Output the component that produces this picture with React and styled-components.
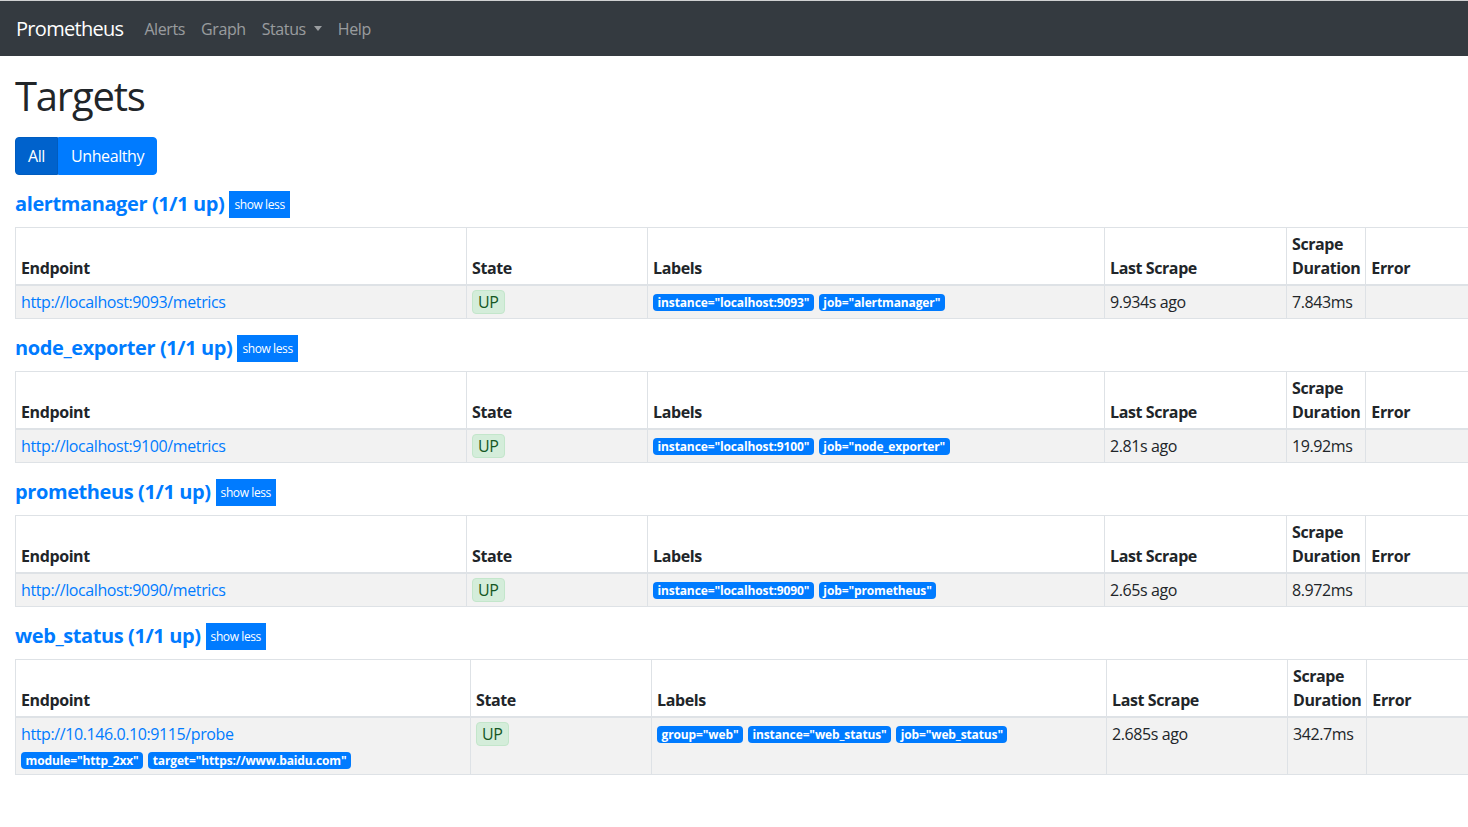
import React from "react";
import styled, { createGlobalStyle } from "styled-components";

const GlobalStyle = createGlobalStyle`
  body {
    margin: 0;
    font-family: "Open Sans", "Noto Sans", sans-serif;
    font-size: 16px;
    line-height: 1.5;
    letter-spacing: -0.025em;
    color: #212529;
    background: #fff;
    overflow-x: hidden;
  }
  button {
    letter-spacing: inherit;
  }
`;

const NavBar = styled.nav`
  height: 56px;
  box-sizing: border-box;
  border-top: 1px solid #cfd0d2;
  background: #343a40;
  display: flex;
  align-items: center;
  padding: 0 16px;
`;

const Brand = styled.span`
  color: #fff;
  font-size: 20px;
  letter-spacing: -0.035em;
  margin-right: 13px;
`;

const NavLink = styled.span`
  color: rgba(255, 255, 255, 0.5);
  padding: 0 8px;
  display: flex;
  align-items: center;
`;

const Caret = styled.span`
  display: inline-block;
  margin-left: 8px;
  border-top: 5px solid rgba(255, 255, 255, 0.5);
  border-left: 4.5px solid transparent;
  border-right: 4.5px solid transparent;
`;

const Main = styled.main`
  padding: 0 15px;
`;

const Title = styled.h1`
  font-size: 40px;
  font-weight: 500;
  line-height: 1.2;
  letter-spacing: -0.03em;
  margin: 16px 0 17px;
`;

const ButtonGroup = styled.div`
  display: flex;
  margin-bottom: 16px;
`;

const FilterButton = styled.button`
  font: inherit;
  color: #fff;
  border: 1px solid ${(p) => (p.$active ? "#005cbf" : "#007bff")};
  background: ${(p) => (p.$active ? "#0062cc" : "#007bff")};
  padding: 6px 12px;
  line-height: 24px;
  border-radius: ${(p) => (p.$first ? "4px 0 0 4px" : "0 4px 4px 0")};
`;

const JobHeader = styled.div`
  display: flex;
  align-items: center;
  height: 27px;
  margin-bottom: 9px;
`;

const JobName = styled.span`
  color: #007bff;
  font-size: 20px;
  font-weight: 700;
  margin-right: 5px;
  position: relative;
  top: -1px;
`;

const ShowLess = styled.button`
  font-family: inherit;
  font-size: 12px;
  color: #fff;
  background: #007bff;
  border: none;
  border-radius: 0;
  height: 27px;
  padding: 0 5px;
`;

const Table = styled.table`
  width: 1804px;
  border-collapse: collapse;
  margin-bottom: 16px;
`;

const Th = styled.th`
  text-align: left;
  vertical-align: bottom;
  font-weight: 700;
  padding: 4px 5px;
  border: 1px solid #dee2e6;
  border-bottom: 2px solid #dee2e6;
  width: ${(p) => p.$w || "auto"};
`;

const Row = styled.tr`
  background: #f2f2f2;
`;

const Td = styled.td`
  vertical-align: top;
  padding: 4px 5px;
  border: 1px solid #dee2e6;
`;

const Link = styled.a`
  color: #007bff;
  text-decoration: none;
  display: block;
`;

const StateBadge = styled.span`
  display: inline-block;
  background: #d4edda;
  border: 1px solid #c3e6cb;
  color: #155724;
  border-radius: 4px;
  padding: 0 5px;
  line-height: 22px;
  margin-top: -1px;
`;

const LabelList = styled.div`
  display: flex;
  flex-wrap: wrap;
  gap: 5px;
  padding-top: ${(p) => (p.$under ? "6px" : "4px")};
  padding-bottom: ${(p) => (p.$under ? "1px" : "0")};
`;

const Label = styled.span`
  background: #007bff;
  color: #fff;
  font-size: 12px;
  font-weight: 700;
  letter-spacing: -0.01em;
  line-height: 12px;
  padding: 2.5px 4.5px;
  border-radius: 4px;
  white-space: nowrap;
`;

const jobs = [
  {
    name: "alertmanager",
    endpoint: "http://localhost:9093/metrics",
    labels: ['instance="localhost:9093"', 'job="alertmanager"'],
    last: "9.934s ago",
    duration: "7.843ms",
  },
  {
    name: "node_exporter",
    endpoint: "http://localhost:9100/metrics",
    labels: ['instance="localhost:9100"', 'job="node_exporter"'],
    last: "2.81s ago",
    duration: "19.92ms",
  },
  {
    name: "prometheus",
    endpoint: "http://localhost:9090/metrics",
    labels: ['instance="localhost:9090"', 'job="prometheus"'],
    last: "2.65s ago",
    duration: "8.972ms",
  },
  {
    name: "web_status",
    endpoint: "http://10.146.0.10:9115/probe",
    params: ['module="http_2xx"', 'target="https://www.baidu.com"'],
    labels: ['group="web"', 'instance="web_status"', 'job="web_status"'],
    last: "2.685s ago",
    duration: "342.7ms",
    wide: true,
  },
];

const JobTable = ({ job }) => (
  <>
    <JobHeader>
      <JobName>
        {job.name} (1/1 up)
      </JobName>
      <ShowLess>show less</ShowLess>
    </JobHeader>
    <Table>
      <thead>
        <tr>
          <Th $w={job.wide ? "444px" : "440px"}>Endpoint</Th>
          <Th $w="170px">State</Th>
          <Th $w={job.wide ? "444px" : "446px"}>Labels</Th>
          <Th $w={job.wide ? "170px" : "171px"}>Last Scrape</Th>
          <Th $w="66px">Scrape Duration</Th>
          <Th>Error</Th>
        </tr>
      </thead>
      <tbody>
        <Row>
          <Td>
            <Link href="#">{job.endpoint}</Link>
            {job.params && (
              <LabelList $under>
                {job.params.map((l) => (
                  <Label key={l}>{l}</Label>
                ))}
              </LabelList>
            )}
          </Td>
          <Td>
            <StateBadge>UP</StateBadge>
          </Td>
          <Td>
            <LabelList>
              {job.labels.map((l) => (
                <Label key={l}>{l}</Label>
              ))}
            </LabelList>
          </Td>
          <Td>{job.last}</Td>
          <Td>{job.duration}</Td>
          <Td />
        </Row>
      </tbody>
    </Table>
  </>
);

export default function App() {
  return (
    <>
      <GlobalStyle />
      <NavBar>
        <Brand>Prometheus</Brand>
        <NavLink>Alerts</NavLink>
        <NavLink>Graph</NavLink>
        <NavLink>
          Status
          <Caret />
        </NavLink>
        <NavLink>Help</NavLink>
      </NavBar>
      <Main>
        <Title>Targets</Title>
        <ButtonGroup>
          <FilterButton $active $first>
            All
          </FilterButton>
          <FilterButton>Unhealthy</FilterButton>
        </ButtonGroup>
        {jobs.map((job) => (
          <JobTable key={job.name} job={job} />
        ))}
      </Main>
    </>
  );
}
